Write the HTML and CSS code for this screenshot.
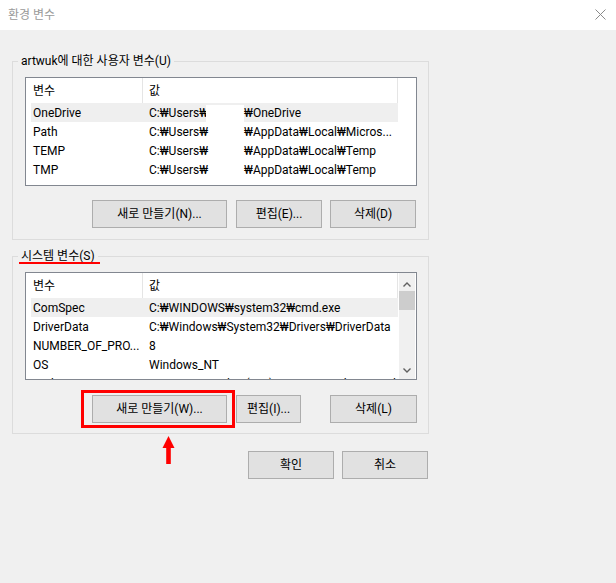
FILE: index.html
```html
<!DOCTYPE html>
<html lang="ko">
<head>
<meta charset="utf-8">
<title>환경 변수</title>
<link rel="stylesheet" href="styles.css">
</head>
<body>
<div class="titlebar">
  <span class="title">환경 변수</span>
  <span class="close"><svg width="11" height="11" viewBox="0 0 11 11"><path d="M0.5 0.5 L10.5 10.5 M10.5 0.5 L0.5 10.5" stroke="#8a8a8a" stroke-width="1" fill="none"/></svg></span>
</div>
<div class="content">
  <section class="group g-user">
    <div class="legend">artwuk에 대한 사용자 변수(U)</div>
    <div class="list list-user">
      <div class="lbody">
        <div class="lhead"><div class="h1">변수</div><div class="h2">값</div></div>
        <div class="row sel"><div class="c1">OneDrive</div><div class="c2"><span class="pa">C:₩Users₩</span><span class="blank"></span><span class="pb">₩OneDrive</span></div></div>
        <div class="row"><div class="c1">Path</div><div class="c2"><span class="pa">C:₩Users₩</span><span class="blank"></span><span class="pb">₩AppData₩Local₩Micros...</span></div></div>
        <div class="row"><div class="c1">TEMP</div><div class="c2"><span class="pa">C:₩Users₩</span><span class="blank"></span><span class="pb">₩AppData₩Local₩Temp</span></div></div>
        <div class="row"><div class="c1">TMP</div><div class="c2"><span class="pa">C:₩Users₩</span><span class="blank"></span><span class="pb">₩AppData₩Local₩Temp</span></div></div>
      </div>
    </div>
    <div class="btns">
      <div class="btn b-new">새로 만들기(N)...</div>
      <div class="btn b-edit">편집(E)...</div>
      <div class="btn b-del">삭제(D)</div>
    </div>
  </section>
  <section class="group g-sys">
    <div class="legend legend-marked">시스템 변수(S)</div>
    <div class="list list-sys">
      <div class="lbody">
        <div class="lhead"><div class="h1">변수</div><div class="h2">값</div></div>
        <div class="row sel"><div class="c1">ComSpec</div><div class="c2">C:₩WINDOWS₩system32₩cmd.exe</div></div>
        <div class="row"><div class="c1">DriverData</div><div class="c2">C:₩Windows₩System32₩Drivers₩DriverData</div></div>
        <div class="row"><div class="c1">NUMBER_OF_PRO...</div><div class="c2">8</div></div>
        <div class="row"><div class="c1">OS</div><div class="c2">Windows_NT</div></div>
        <div class="row"><div class="c1">Path</div><div class="c2">C:₩Program Files (x86)₩Common Files₩Oracle₩Java₩javapath;...</div></div>
      </div>
      <div class="scroll">
        <div class="sb-up"><svg width="8" height="5" viewBox="0 0 8 5"><path d="M0.5 4.5 L4 1 L7.5 4.5" stroke="#606060" stroke-width="1.4" fill="none"/></svg></div>
        <div class="sb-track"><div class="thumb"></div></div>
        <div class="sb-down"><svg width="8" height="5" viewBox="0 0 8 5"><path d="M0.5 0.5 L4 4 L7.5 0.5" stroke="#606060" stroke-width="1.4" fill="none"/></svg></div>
      </div>
    </div>
    <div class="btns">
      <div class="btn b-new marked">새로 만들기(W)...</div>
      <div class="btn b-edit b-edit2">편집(I)...</div>
      <div class="btn b-del b-del2">삭제(L)</div>
    </div>
  </section>
  <div class="footer">
    <svg class="arrow" width="13" height="28" viewBox="0 0 13 28"><polygon points="6.5,0 0.5,12 12.5,12" fill="#f00"/><rect x="4.2" y="11" width="4.6" height="17" fill="#f00"/></svg>
    <div class="btn b-ok">확인</div>
    <div class="btn b-cancel">취소</div>
  </div>
</div>
</body>
</html>
```
FILE: styles.css
```css
*, *::before, *::after { box-sizing: border-box; }
html, body { margin: 0; }
body {
  background: #f0f0f0;
  font-family: Roboto, "DejaVu Sans", "Noto Sans CJK KR", sans-serif;
  font-size: 12px;
  color: #000;
  width: 616px;
  height: 583px;
  overflow: hidden;
}
.titlebar {
  height: 30px;
  background: #fff;
  display: flex;
  align-items: center;
  justify-content: space-between;
  padding: 0 10px 0 8px;
}
.title { color: #9a9a9a; line-height: 16px; }
.close { display: flex; margin-bottom: 2px; }
.content { padding: 31px 0 0 12px; }
.group {
  position: relative;
  width: 417px;
  border: 1px solid #dcdcdc;
  padding: 15px 11px 11px 12px;
}
.g-sys { margin-top: 16px; padding-bottom: 10px; }
.legend {
  position: absolute;
  top: -9px;
  left: 5px;
  line-height: 16px;
  padding: 0 3px;
  background: #f0f0f0;
  white-space: nowrap;
}
.legend-marked::after {
  content: "";
  position: absolute;
  left: 1px;
  top: 14px;
  width: 81px;
  height: 2px;
  background: #f00;
}
.list {
  border: 1px solid #828790;
  background: #fff;
  overflow: hidden;
}
.list-user { height: 109px; }
.list-sys { height: 108px; display: flex; }
.lbody { width: 372px; flex: none; }
.lhead { display: flex; height: 25px; line-height: 27px; overflow: hidden; }
.lhead .h1 { width: 117px; padding-left: 7px; border-right: 1px solid #e5e5e5; }
.lhead .h2 { width: 255px; padding-left: 6px; border-right: 1px solid #e5e5e5; }
.row {
  display: flex;
  height: 19px;
  line-height: 21px;
  margin-left: 5px;
  width: 367px;
  white-space: nowrap;
  overflow: hidden;
}
.row.sel { background: #efefef; }
.row .c1 { width: 112px; flex: none; padding-left: 2px; overflow: hidden; }
.row .c2 { padding-left: 6px; display: flex; }
.pa { width: 57px; flex: none; }
.blank { width: 38px; height: 17px; margin-top: 2px; flex: none; }
.row.sel .blank { background: #fff; }
.scroll {
  width: 16px;
  margin: 0 1px;
  background: #f0f0f0;
  display: flex;
  flex-direction: column;
}
.sb-up, .sb-down { height: 17px; display: flex; justify-content: center; align-items: flex-start; }
.sb-up svg { display: block; margin-top: 9px; }
.sb-down svg { display: block; margin-top: 6px; }
.sb-track { flex: 1; }
.thumb { margin-top: 1px; height: 19px; background: #cdcdcd; }
.btns { display: flex; margin-top: 14px; }
.g-sys .btns { margin-top: 15px; }
.btn {
  height: 28px;
  background: #e1e1e1;
  border: 1px solid #adadad;
  display: flex;
  align-items: center;
  justify-content: center;
  line-height: 16px;
  white-space: nowrap;
}
.b-new { width: 135px; margin-left: 67px; }
.b-edit { width: 86px; margin-left: 9px; }
.b-del { width: 86px; margin-left: 8px; }
.b-edit2 { width: 65px; }
.b-del2 { width: 87px; margin-left: 29px; }
.marked { position: relative; }
.marked::after {
  content: "";
  position: absolute;
  left: -12px;
  top: -6px;
  width: 154px;
  height: 38px;
  border: 3px solid #f00;
}
.footer {
  position: relative;
  width: 416px;
  display: flex;
  justify-content: flex-end;
  padding-top: 17px;
}
.arrow { position: absolute; left: 150px; top: 2px; }
.b-ok { width: 86px; }
.b-cancel { width: 86px; margin-left: 8px; }
```
